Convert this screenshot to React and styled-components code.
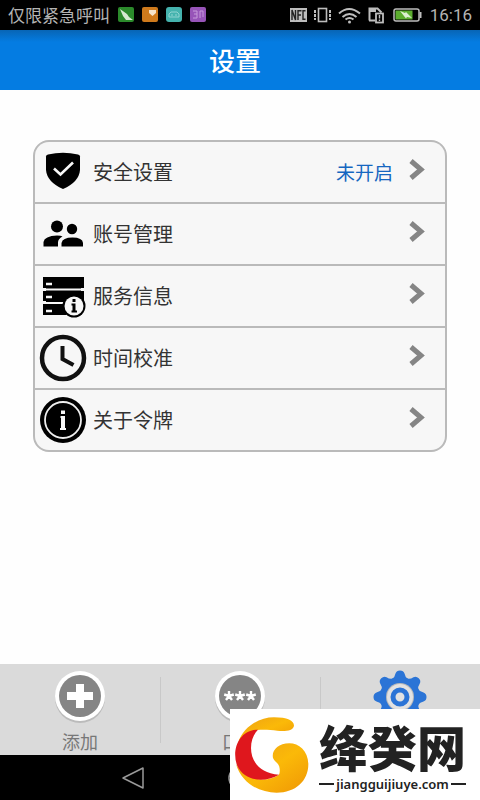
import React from "react";
import styled, { createGlobalStyle } from "styled-components";

const Global = createGlobalStyle`
  * { box-sizing: border-box; }
  body { margin: 0; background: #fefefe; font-family: "Noto Sans CJK SC", sans-serif; }
  button { border: 0; padding: 0; background: none; font: inherit; color: inherit; cursor: pointer; }
  svg { display: block; flex: none; }
`;

const Screen = styled.div`
  position: relative;
  display: flex;
  flex-direction: column;
  min-height: 100vh;
  overflow: hidden;
`;

const StatusBar = styled.div`
  display: flex;
  align-items: center;
  justify-content: space-between;
  height: 30px;
  padding: 0 8px;
  background: #000;
  color: #b4b4b4;
`;

const StatusGroup = styled.div`
  display: flex;
  align-items: center;
  gap: 8px;
`;

const Carrier = styled.span`
  font-size: 17px;
  line-height: 24px;
`;

const Clock = styled.time`
  font-family: Roboto, sans-serif;
  font-size: 17px;
  line-height: 24px;
`;

const Header = styled.header`
  display: flex;
  align-items: center;
  justify-content: center;
  height: 60px;
  padding-right: 10px;
  background: linear-gradient(#0865b5, #047ce2 12px, #047ce2);
  color: #fff;
`;

const Title = styled.h1`
  margin: 0;
  font-size: 26px;
  line-height: 36px;
  font-weight: 500;
`;

const Main = styled.main`
  flex: 1;
  padding: 50px 33px;
`;

const Card = styled.div`
  display: flex;
  flex-direction: column;
  gap: 2px;
  overflow: hidden;
  border: 2px solid #bababa;
  border-radius: 16px;
  background: #bababa;
`;

const Row = styled.button`
  && {
    display: flex;
    align-items: center;
    height: 60px;
    padding: 0 18px 0 4px;
    background: #f7f7f7;
    text-align: left;
  }
`;

const RowLabel = styled.span`
  flex: 1;
  padding-left: 6px;
  color: #333;
  font-size: 20px;
  line-height: 28px;
`;

const RowStatus = styled.span`
  padding-right: 16px;
  color: #1566c0;
  font-size: 19px;
  line-height: 28px;
`;

const TabBar = styled.nav`
  display: grid;
  grid-template-columns: repeat(3, 1fr);
  height: 91px;
  padding: 5px 0 0;
  background: #dadada;
`;

const Tab = styled.button`
  && {
    display: flex;
    flex-direction: column;
    align-items: center;
    gap: 2px;
    color: ${(p) => (p.$active ? "#1f6fd0" : "#777")};
    font-size: 18px;
    line-height: 28px;
  }
  & + & {
    background: linear-gradient(#c8c8c8, #c8c8c8) left 8px / 1px 66px no-repeat;
  }
`;

const NavBar = styled.div`
  display: flex;
  align-items: center;
  justify-content: space-around;
  height: 45px;
  padding: 0 80px;
  background: #000;
`;

const Watermark = styled.aside`
  position: absolute;
  right: 0;
  bottom: 0;
  display: flex;
  align-items: center;
  gap: 9px;
  width: 250px;
  height: 91px;
  padding-left: 4px;
  background: #fff;
  color: #222;
`;

const Brand = styled.div`
  display: flex;
  flex-direction: column;
  align-items: center;
`;

const BrandName = styled.strong`
  font-size: 49px;
  line-height: 58px;
  font-weight: 900;
`;

const BrandSite = styled.span`
  display: flex;
  align-items: center;
  gap: 2px;
  font-family: "Noto Sans", sans-serif;
  font-size: 13px;
  line-height: 18px;
  font-weight: 600;
  &::before, &::after {
    content: "";
    width: 15px;
    height: 2px;
    background: #222;
  }
`;

const AppBadges = () => (
  <svg width="88" height="16" viewBox="0 0 88 16" aria-hidden="true">
    <rect width="16" height="15" rx="2" fill="#2b8a2b" />
    <path d="M2 2l7 5 2 3 4 3H8L5 9z" fill="#d5ead0" />
    <rect x="24" width="16" height="15" rx="2" fill="#cf7a1c" />
    <path d="M31 3h7v3l-3.500 3L31 6z" fill="#f5e3cb" />
    <rect x="48" width="16" height="15" rx="3" fill="#45b3ae" />
    <path d="M51 10V7l2-2h6l2 2v3zM54 7v2M58 7v2" fill="none" stroke="#8fd4d0" />
    <rect x="72" width="16" height="15" rx="2" fill="#9754b8" />
    <path d="M75 4h4v3h-3M79 7v4h-4M82 11V4h3v6" fill="none" stroke="#c79bdb" />
  </svg>
);

const DeviceIcons = () => (
  <svg width="132" height="18" viewBox="0 0 132 18" fill="none" stroke="#bdbdbd" aria-hidden="true">
    <rect x="0" y="2" width="17" height="14" fill="#bdbdbd" stroke="none" />
    <path d="M2 14V4l3.500 10V4M8 14V4.700h3.500M8 9h3M15.500 4.700H13v8.600h2.500" stroke="#222" strokeWidth="1.400" />
    <rect x="28.500" y="2.500" width="8" height="13" strokeWidth="1.600" />
    <path d="M25 4v10M40 4v10" strokeWidth="2" strokeDasharray="3 1" />
    <path d="M49 7.500q10-9 21 0M52.500 11q7-6 14 0" strokeWidth="2" />
    <path d="M55.500 13.500q4-3 8 0" strokeWidth="2" />
    <circle cx="59.500" cy="16" r="1.500" fill="#bdbdbd" stroke="none" />
    <path d="M79.500 14.500v-12h8l4 4M79 14.500h6" strokeWidth="2" />
    <path d="M79 2h7v4h-7z" fill="#bdbdbd" stroke="none" />
    <rect x="86" y="7.500" width="7" height="9" strokeWidth="1.800" />
    <path d="M89.500 9v3.500M89.500 13.500V15" strokeWidth="1.400" />
    <rect x="104" y="3" width="25" height="12" rx="2" strokeWidth="1.500" />
    <rect x="105.500" y="4.500" width="17" height="9" fill="#5bad2e" stroke="none" />
    <path d="M110 5l5 2 1-1 6 6-5-1-1 1.500z" fill="#dcefd0" stroke="none" />
    <path d="M130.500 6v6" strokeWidth="2" />
  </svg>
);

const Chevron = () => (
  <svg width="18" height="26" viewBox="0 0 18 26" fill="none" stroke="#858585" strokeWidth="5" aria-hidden="true">
    <path d="M2 2l10 8.500-10 8.500" />
  </svg>
);

const RowIcon = ({ children }) => (
  <svg width="48" height="48" viewBox="0 0 48 48" aria-hidden="true">{children}</svg>
);

const rows = [
  {
    label: "安全设置",
    status: "未开启",
    icon: (
      <>
        <path d="M7 8.500Q7 7 9 6.500Q24 3 39 6.500Q41 7 41 8.500V22Q40 34 24 41Q8 34 7 22z" />
        <path d="M15 20.500l6.500 6L34 14.500" fill="none" stroke="#f7f7f7" strokeWidth="2.600" />
      </>
    ),
  },
  {
    label: "账号管理",
    icon: (
      <>
        <circle cx="18" cy="16.500" r="6" />
        <circle cx="33" cy="19" r="5.200" />
        <path d="M4.500 36.500v-4.500q1-6 13.500-6.500q4 0 5.500 1q-4.500 2.500-4.500 6v4z" />
        <path d="M22.500 36.500v-3.500q1-5.500 11-5.500t10.500 5.500v3.500z" />
      </>
    ),
  },
  {
    label: "服务信息",
    icon: (
      <>
        <path d="M4 5h41v11H4zM4 19h41v10H4zM4 32h23v11H4z" />
        <path d="M7 16h35v3H7zM7 29h18v3H7z" />
        <path d="M7 17.500h35M4 31h22" stroke="#f7f7f7" strokeWidth="2" />
        <path d="M7 12h6M7 25h6M7 39h6" stroke="#f7f7f7" strokeWidth="2.500" />
        <circle cx="35" cy="34" r="11.500" />
        <circle cx="35" cy="34" r="9.500" fill="#f7f7f7" />
        <path d="M33.500 27h3v3h-3zM32.500 31.500h4v7h1.500v2h-5.500v-2h1v-5h-1z" />
      </>
    ),
  },
  {
    label: "时间校准",
    icon: (
      <>
        <circle cx="24" cy="24" r="21" fill="none" stroke="#111" strokeWidth="4.500" />
        <path d="M23.500 12v13l11 6" fill="none" stroke="#111" strokeWidth="4" />
      </>
    ),
  },
  {
    label: "关于令牌",
    icon: (
      <>
        <circle cx="24" cy="24" r="23" />
        <circle cx="24" cy="24" r="18" fill="none" stroke="#eee" strokeWidth="1.800" />
        <path d="M22 14.500h4v3.500h-4zM21.500 20H26v12h1v2h-6v-2h1V22h-.5z" fill="#f7f7f7" />
      </>
    ),
  },
];

const Disc = ({ children }) => (
  <svg width="54" height="56" viewBox="0 0 54 56" aria-hidden="true">
    <circle cx="27" cy="29" r="25" fill="#bbb" />
    <circle cx="27" cy="27" r="25" fill="#fff" />
    <circle cx="27" cy="27" r="21" fill="#858585" />
    {children}
  </svg>
);

const Gear = () => (
  <svg width="54" height="56" viewBox="0 0 54 56" aria-hidden="true">
    <g fill="#2b74d6" transform="translate(27 28)">
      <circle r="20" />
      {[0, 45, 90, 135, 180, 225, 270, 315].map((a) => (
        <path key={a} transform={`rotate(${a})`} d="M-8-18Q-5-20-4.500-23.500Q-3.500-26.500 0-26.500T4.500-23.500Q5-20 8-18z" />
      ))}
    </g>
    <circle cx="27" cy="28" r="14" fill="#b9b9b9" />
    <circle cx="27" cy="28" r="13" fill="#e2e2e2" />
    <circle cx="27" cy="28" r="7" fill="none" stroke="#2b74d6" strokeWidth="5" />
  </svg>
);

const Logo = () => (
  <svg width="76" height="78" viewBox="12 16 228 234" aria-hidden="true">
    <defs>
      <linearGradient id="gold" x2="1" y2="1">
        <stop stopColor="#eda016" />
        <stop offset=".5" stopColor="#fbb908" />
        <stop offset="1" stopColor="#ef9605" />
      </linearGradient>
    </defs>
    <path d="M24 96C42 46 88 20 132 20C172 20 192 30 192 45C190 60 165 63 142 60C122 58 104 56 82 58C58 62 38 74 24 96z" fill="url(#gold)" />
    <path d="M18 160C34 216 86 246 140 246C196 246 235 212 235 160C234 120 206 98 178 98C144 98 124 120 129 142C134 154 148 158 149 174C150 184 149 192 144 194C112 216 46 212 18 160z" fill="url(#gold)" />
    <path d="M84 57C48 92 52 186 147 192C98 220 42 208 22 166C4 122 24 58 84 57z" fill="#df171d" />
  </svg>
);

export default function App() {
  return (
    <Screen>
      <Global />
      <StatusBar>
        <StatusGroup>
          <Carrier>仅限紧急呼叫</Carrier>
          <AppBadges />
        </StatusGroup>
        <StatusGroup>
          <DeviceIcons />
          <Clock>16:16</Clock>
        </StatusGroup>
      </StatusBar>
      <Header>
        <Title>设置</Title>
      </Header>
      <Main>
        <Card>
          {rows.map((r) => (
            <Row key={r.label} type="button">
              <RowIcon>{r.icon}</RowIcon>
              <RowLabel>{r.label}</RowLabel>
              {r.status && <RowStatus>{r.status}</RowStatus>}
              <Chevron />
            </Row>
          ))}
        </Card>
      </Main>
      <TabBar>
        <Tab type="button">
          <Disc>
            <path d="M23 15h8v8h9v8h-9v8h-8v-8h-9v-8h9z" fill="#fff" />
          </Disc>
          添加
        </Tab>
        <Tab type="button">
          <Disc>
            {[16, 27, 38].map((x) => (
              <path key={x} transform={`translate(${x} 27)`} d="M0 0V-5M0 0l4.800-1.500M0 0l3 4M0 0l-3 4M0 0l-4.800-1.500" stroke="#fff" strokeWidth="2.400" />
            ))}
          </Disc>
          口令
        </Tab>
        <Tab type="button" $active aria-label="设置">
          <Gear />
        </Tab>
      </TabBar>
      <NavBar>
        <svg width="24" height="24" viewBox="0 0 24 24" fill="none" stroke="#999" strokeWidth="1.500" aria-hidden="true">
          <path d="M2 12L22 2v20z" strokeLinejoin="round" />
        </svg>
        <svg width="24" height="24" viewBox="0 0 24 24" fill="none" stroke="#999" strokeWidth="1.500" aria-hidden="true">
          <circle cx="12" cy="12" r="11" />
        </svg>
        <svg width="24" height="24" viewBox="0 0 24 24" fill="none" stroke="#999" strokeWidth="1.500" aria-hidden="true">
          <rect x="2" y="2" width="20" height="20" />
        </svg>
      </NavBar>
      <Watermark>
        <Logo />
        <Brand>
          <BrandName>绛癸网</BrandName>
          <BrandSite>jiangguijiuye.com</BrandSite>
        </Brand>
      </Watermark>
    </Screen>
  );
}
